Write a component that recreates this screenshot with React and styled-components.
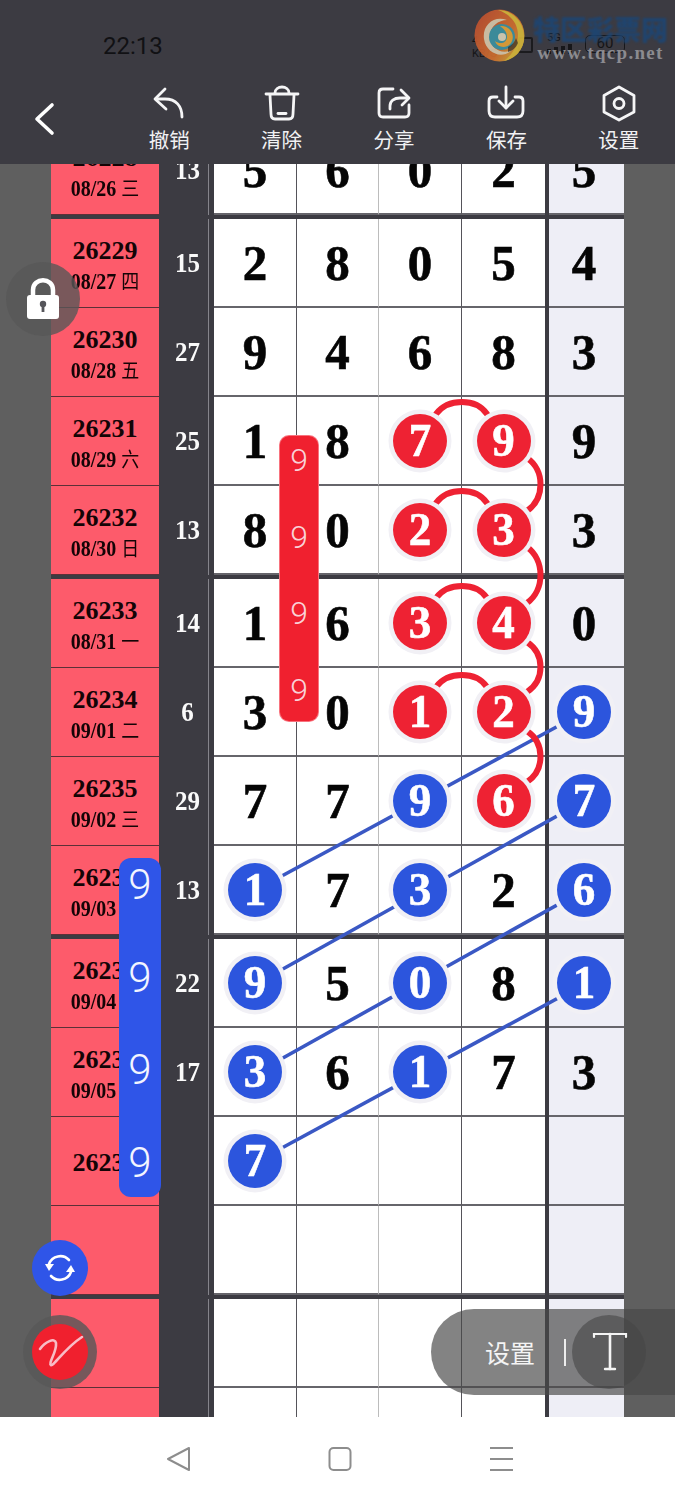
import React from "react";
import styled, { createGlobalStyle } from "styled-components";

const Global = createGlobalStyle`
  html, body { margin: 0; padding: 0; background: #ffffff; }
  * { box-sizing: border-box; }
`;

const SERIF = `"Liberation Serif", "Noto Sans CJK SC", serif`;
const SANS = `"Noto Sans CJK SC", "Noto Sans", sans-serif`;
const DARK = "#3c3b42";
const RED = "#ee2233";
const BLUE = "#2c55dd";

const Page = styled.div`
  position: relative;
  width: 675px;
  height: 1500px;
  overflow: hidden;
  display: flex;
  flex-direction: column;
`;

const Header = styled.header`
  position: relative;
  z-index: 6;
  height: 164px;
  background: ${DARK};
  flex: none;
`;

const StatusRow = styled.div`
  height: 83px;
  display: flex;
  justify-content: space-between;
  padding: 32px 50px 0 103px;
`;

const Clock = styled.span`
  font: 400 24px/28px Roboto, sans-serif;
  color: #111114;
`;

const StatusGroup = styled.div`
  display: flex;
  align-items: flex-start;
  gap: 6px;
  color: #141416;
  font-family: Roboto, sans-serif;
`;

const Speed = styled.div`
  width: 40px;
  font-size: 11px;
  line-height: 13px;
  padding-top: 2px;
`;

const SimBox = styled.div`
  width: 15px;
  height: 16px;
  margin-top: 5px;
  border: 2px solid #1b1b1e;
  border-radius: 2px;
`;

const Signal = styled.div`
  width: 32px;
  font-size: 11px;
  line-height: 12px;
  margin-left: 8px;
`;

const Bars = styled.div`
  display: flex;
  align-items: flex-end;
  gap: 3px;
  height: 10px;
`;

const Bar = styled.i`
  display: block;
  width: 4px;
  height: ${(p) => p.$h}px;
  background: #17171a;
`;

const Battery = styled.div`
  width: 40px;
  height: 18px;
  margin-top: 3px;
  border: 1.5px solid #17171a;
  border-radius: 5px;
  font-size: 15px;
  line-height: 15px;
  text-align: center;
`;

const Watermark = styled.div`
  position: absolute;
  top: 9px;
  left: 474px;
  display: flex;
  gap: 8px;
`;

const WatermarkText = styled.div`
  display: flex;
  flex-direction: column;
  align-items: center;
  padding-top: 6px;
`;

const WatermarkTitle = styled.span`
  font: 900 27px/28px ${SANS};
  color: #1b4676;
  opacity: 0.85;
  white-space: nowrap;
  filter: blur(0.9px);
`;

const WatermarkUrl = styled.span`
  font: 700 19px/20px ${SERIF};
  letter-spacing: 1.3px;
  color: #8b8b90;
  white-space: nowrap;
`;

const Toolbar = styled.nav`
  display: flex;
`;

const BackSlot = styled.div`
  width: 113px;
  flex: none;
  height: 81px;
  padding-left: 20px;
`;

const ToolItem = styled.div`
  flex: 1;
  display: flex;
  flex-direction: column;
  align-items: center;
`;

const ToolLabel = styled.span`
  font: 400 20.5px/32px ${SANS};
  color: #f1f1f3;
`;

const Body = styled.main`
  flex: 1;
  overflow: hidden;
  background: #5f5f5f;
  padding: 0 51px;
`;

const Table = styled.div`
  margin-top: -38px;
  width: 573px;
`;

const Row = styled.div`
  display: grid;
  grid-template-columns: 108px 55px 83px 82px 83px 83px 79px;
  height: ${(p) => (p.$heavy ? 93 : 89)}px;
  padding-top: ${(p) => (p.$heavy ? 4 : 0)}px;
  background: ${DARK};
`;

const DateCell = styled.div`
  background: #fd5b6b;
  border-bottom: 1px solid #5d3038;
  display: flex;
  flex-direction: column;
  align-items: center;
  justify-content: center;
  padding-top: 3px;
  color: #140406;
  font-family: ${SERIF};
  font-weight: 700;
  white-space: nowrap;
`;

const Issue = styled.span`
  font-size: 26px;
  line-height: 31px;
`;

const DateText = styled.span`
  display: inline-block;
  font-size: 20px;
  line-height: 28px;
  transform: scaleY(1.12);
`;

const Weekday = styled.span`
  font-family: ${SANS};
  font-weight: 400;
  font-size: 18px;
  margin-left: 5px;
`;

const NumCell = styled.div`
  margin-right: 5px;
  padding: 0 0 3px 8px;
  border-right: 1px solid #85848b;
  display: flex;
  align-items: center;
  justify-content: center;
  color: #fafafa;
  font: 700 25px/1 ${SERIF};
`;

const NumText = styled.span`
  display: inline-block;
  transform: scaleY(1.1);
`;

const Cell = styled.div`
  background: #ffffff;
  border-bottom: 2px solid #66656b;
  border-right: ${(p) => (p.$line ? `1px solid ${p.$line}` : "none")};
  display: flex;
  align-items: center;
  justify-content: center;
  color: #050505;
  font: 700 49px/1 ${SERIF};
`;

const ExtraCell = styled(Cell)`
  margin-left: 4px;
  padding-right: 5px;
  background: #eeeef6;
`;

const Digit = styled.span`
  display: inline-block;
  transform: scaleY(1.05);
  -webkit-text-stroke: 0.6px currentColor;
`;

const Ball = styled.span`
  position: relative;
  z-index: 2;
  width: 54px;
  height: 54px;
  border-radius: 50%;
  background: ${(p) => (p.$tone === "r" ? RED : BLUE)};
  box-shadow: 0 0 0 4.500px #f1f0f5;
  color: #ffffff;
  display: flex;
  align-items: center;
  justify-content: center;
  font-size: 45px;
`;

const Links = styled.svg`
  position: absolute;
  z-index: 1;
  left: 0;
  top: 0;
  pointer-events: none;
`;

const Pill = styled.div`
  position: absolute;
  z-index: 3;
  display: flex;
  flex-direction: column;
  align-items: center;
  font-family: Roboto, sans-serif;
  font-weight: 300;
`;

const RedPill = styled(Pill)`
  left: 280px;
  top: 436px;
  width: 38px;
  height: 285px;
  padding-top: 4px;
  border-radius: 9px;
  background: #f0202f;
  color: #f9d2d7;
  font-size: 32px;
  line-height: 40px;
  gap: 36.5px;
  box-shadow: 0 0 0 1px #f8737e;
`;

const BluePill = styled(Pill)`
  left: 119px;
  top: 858px;
  width: 42px;
  height: 339px;
  padding-top: 1px;
  border-radius: 12px;
  background: #2f55e8;
  color: #f3f5ff;
  font-size: 42px;
  line-height: 52px;
  gap: 40.7px;
`;

const Lock = styled.div`
  position: absolute;
  z-index: 4;
  left: 6px;
  top: 262px;
  width: 74px;
  height: 74px;
  border-radius: 50%;
  background: rgba(88, 88, 88, 0.8);
`;

const SyncButton = styled.div`
  position: absolute;
  z-index: 4;
  left: 32px;
  top: 1240px;
  width: 56px;
  height: 56px;
  border-radius: 50%;
  background: #2f55e8;
`;

const PenHalo = styled.div`
  position: absolute;
  z-index: 4;
  left: 23px;
  top: 1315px;
  width: 74px;
  height: 74px;
  border-radius: 50%;
  background: rgba(88, 88, 88, 0.82);
  display: flex;
  align-items: center;
  justify-content: center;
`;

const PenButton = styled.div`
  width: 56px;
  height: 56px;
  border-radius: 50%;
  background: #f0202e;
`;

const SettingsPill = styled.div`
  position: absolute;
  z-index: 4;
  left: 431px;
  right: 0;
  top: 1309px;
  height: 86px;
  border-radius: 43px 0 0 43px;
  background: rgba(72, 72, 72, 0.68);
  display: flex;
  align-items: center;
  padding-left: 54px;
`;

const SettingsLabel = styled.span`
  font: 400 25px/1 ${SANS};
  color: #f4f4f4;
  width: 79px;
`;

const PillDivider = styled.i`
  display: block;
  width: 2px;
  height: 27px;
  background: #ededed;
`;

const TextTool = styled.div`
  width: 74px;
  height: 74px;
  margin-left: 6px;
  border-radius: 50%;
  background: rgba(70, 70, 70, 0.6);
`;

const NavBar = styled.footer`
  position: relative;
  z-index: 6;
  flex: none;
  height: 83px;
  background: #ffffff;
  display: flex;
  justify-content: center;
  align-items: center;
  padding-left: 5px;
`;

const NavSlot = styled.div`
  width: 161px;
  display: flex;
  justify-content: center;
`;

const DATA = [
  ["26228", "08/26", "三", "13", ["5", "6", "0", "2", "5"]],
  ["26229", "08/27", "四", "15", ["2", "8", "0", "5", "4"], 1],
  ["26230", "08/28", "五", "27", ["9", "4", "6", "8", "3"]],
  ["26231", "08/29", "六", "25", ["1", "8", "7r", "9r", "9"]],
  ["26232", "08/30", "日", "13", ["8", "0", "2r", "3r", "3"]],
  ["26233", "08/31", "一", "14", ["1", "6", "3r", "4r", "0"], 1],
  ["26234", "09/01", "二", "6", ["3", "0", "1r", "2r", "9b"]],
  ["26235", "09/02", "三", "29", ["7", "7", "9b", "6r", "7b"]],
  ["26236", "09/03", "四", "13", ["1b", "7", "3b", "2", "6b"]],
  ["26237", "09/04", "五", "22", ["9b", "5", "0b", "8", "1b"], 1],
  ["26238", "09/05", "六", "17", ["3b", "6", "1b", "7", "3"]],
  ["26239", "", "", "", ["7b", "", "", "", ""]],
  ["", "", "", "", ["", "", "", "", ""]],
  ["", "", "", "", ["", "", "", "", ""], 1],
  ["", "", "", "", ["", "", "", "", ""]],
];

const LINES = ["#55545a", "#bcbcbc", "#55545a", null];

const Value = ({ v }) => {
  if (!v) return null;
  return v.length === 2 ? (
    <Ball $tone={v[1]}>
      <Digit>{v[0]}</Digit>
    </Ball>
  ) : (
    <Digit>{v}</Digit>
  );
};

const TOOLS = [
  {
    label: "撤销",
    box: "149 83 40 40",
    draw: (
      <>
        <path d="M165 89 L155 99 L166 109" />
        <path d="M156 99 H165 C176 99 182 106 182 117" />
      </>
    ),
  },
  {
    label: "清除",
    box: "261 83 40 40",
    draw: (
      <>
        <path d="M265 94 H297" />
        <path d="M274 93 C274 85 288 85 288 93" />
        <path d="M269 95 L270 114 C270 117 271 119 274 119 H288 C291 119 292 117 292 114 L293 95" />
        <path d="M277 113.5 H285" />
      </>
    ),
  },
  {
    label: "分享",
    box: "374 83 40 40",
    draw: (
      <>
        <path d="M393 89 H383 C380.500 89 379 90.500 379 93 V113 C379 115.500 380.500 117 383 117 H405 C407.500 117 409 115.500 409 113 V105" />
        <path d="M390 109 V106 C390 101 394 98 400 98 H408" />
        <path d="M401 90 L409 98 L402 105" />
      </>
    ),
  },
  {
    label: "保存",
    box: "487 83 40 40",
    draw: (
      <>
        <path d="M498 97 H494 C491.500 97 490 98.500 490 101 V111 C490 115 492 117 496 117 H518 C522 117 524 115 524 111 V101 C524 98.500 522.500 97 520 97 H516" />
        <path d="M507 87 V108" />
        <path d="M500 101 L507 108 L514 101" />
      </>
    ),
  },
  {
    label: "设置",
    box: "599 83 40 40",
    draw: (
      <>
        <path d="M619 87 L634 95.500 V112 L619 120 L604 112 V95.500 Z" />
        <circle cx="619" cy="103.500" r="5" />
      </>
    ),
  },
];

const ToolIcon = styled.svg`
  width: 40px;
  height: 40px;
  fill: none;
  stroke: #f5f5f6;
  stroke-width: 2.8;
  stroke-linecap: round;
  stroke-linejoin: round;
`;

const BallLinks = () => (
  <Links width="675" height="1500" viewBox="0 0 675 1500" fill="none">
    <g stroke="#3a58c4" strokeWidth="3.600">
      <path d="M256 890 L584 712" />
      <path d="M256 984 L584 801" />
      <path d="M256 1073 L584 890" />
      <path d="M256 1162 L584 984" />
    </g>
    <g stroke={RED} strokeWidth="6" strokeLinecap="round">
      <path d="M436 414 C448 398 476 398 487 414" />
      <path d="M436 503 C448 487 476 487 487 503" />
      <path d="M436 598 C448 582 476 582 487 598" />
      <path d="M436 687 C448 671 476 671 487 687" />
      <path d="M527 458 C545 470 545 498 527 511" />
      <path d="M527 547 C545 560 545 590 527 603" />
      <path d="M527 642 C545 654 545 680 527 692" />
      <path d="M527 731 C545 743 545 770 527 782" />
    </g>
  </Links>
);

export default function App() {
  return (
    <Page>
      <Global />
      <Header>
        <StatusRow>
          <Clock>22:13</Clock>
          <StatusGroup>
            <Speed>
              4.
              <br />
              KB/S
            </Speed>
            <SimBox />
            <Signal>
              5G
              <Bars>
                <Bar $h={5} />
                <Bar $h={7} />
                <Bar $h={8} />
                <Bar $h={10} />
              </Bars>
            </Signal>
            <Battery>60</Battery>
          </StatusGroup>
        </StatusRow>
        <Watermark>
          <svg width="51" height="53" viewBox="0 0 51 53" opacity="0.9">
            <defs>
              <linearGradient id="rim" x1="0" y1="0.2" x2="1" y2="0.9">
                <stop offset="0" stopColor="#c04f30" />
                <stop offset="0.6" stopColor="#d2702f" />
                <stop offset="1" stopColor="#cdb83a" />
              </linearGradient>
            </defs>
            <ellipse cx="25.500" cy="26.500" rx="25" ry="26" fill="url(#rim)" />
            <path d="M24 1 C40 1 51 14 50 30 C49 42 40 50 30 52 C40 44 44 36 44 26 C44 14 36 5 24 1 Z" fill="#d8b93a" />
            <path d="M10 30 C8 16 20 6 33 11 C24 11 15 18 16 29 C17 40 28 46 38 41 C28 51 12 44 10 30 Z" fill="#d9c9ac" />
            <circle cx="28" cy="28" r="13" fill="#3b93a3" />
            <path d="M26 17 C36 16 42 26 37 34 C33 40 23 39 21 32 C26 36 33 34 33 28 C33 23 30 20 26 17 Z" fill="#e3a336" />
            <circle cx="28" cy="28" r="4" fill="#d9d2b8" />
            <path d="M34 38 C38 36 41 33 42 29 L44 34 C42 39 38 42 34 43 Z" fill="#1d1d20" opacity="0.6" />
          </svg>
          <WatermarkText>
            <WatermarkTitle>特区彩票网</WatermarkTitle>
            <WatermarkUrl>www.tqcp.net</WatermarkUrl>
          </WatermarkText>
        </Watermark>
        <Toolbar>
          <BackSlot>
            <svg width="40" height="56" viewBox="20 83 40 56" fill="none" stroke="#fff" strokeWidth="3.600" strokeLinecap="round" strokeLinejoin="round">
              <path d="M52 105 L37 119 L52 133" />
            </svg>
          </BackSlot>
          {TOOLS.map((t) => (
            <ToolItem key={t.label}>
              <ToolIcon viewBox={t.box}>{t.draw}</ToolIcon>
              <ToolLabel>{t.label}</ToolLabel>
            </ToolItem>
          ))}
        </Toolbar>
      </Header>

      <Body>
        <Table>
          {DATA.map(([issue, date, day, sum, vals, heavy], i) => (
            <Row key={i} $heavy={!!heavy}>
              <DateCell>
                {issue && <Issue>{issue}</Issue>}
                {date && (
                  <DateText>
                    {date}
                    <Weekday>{day}</Weekday>
                  </DateText>
                )}
              </DateCell>
              <NumCell>
                <NumText>{sum}</NumText>
              </NumCell>
              {vals.slice(0, 4).map((v, j) => (
                <Cell key={j} $line={LINES[j]}>
                  <Value v={v} />
                </Cell>
              ))}
              <ExtraCell>
                <Value v={vals[4]} />
              </ExtraCell>
            </Row>
          ))}
        </Table>
      </Body>

      <BallLinks />

      <RedPill>
        <span>9</span>
        <span>9</span>
        <span>9</span>
        <span>9</span>
      </RedPill>
      <BluePill>
        <span>9</span>
        <span>9</span>
        <span>9</span>
        <span>9</span>
      </BluePill>

      <Lock>
        <svg width="74" height="74" viewBox="6 262 74 74">
          <path d="M33 297 V290 C33 277 53 277 53 290 V297" fill="none" stroke="#fff" strokeWidth="4.500" />
          <rect x="27" y="295" width="32" height="24" rx="3" fill="#fff" />
          <circle cx="43" cy="304" r="3.200" fill="#55555a" />
          <rect x="41.600" y="305" width="2.800" height="7" fill="#55555a" />
        </svg>
      </Lock>

      <SyncButton>
        <svg width="56" height="56" viewBox="32 1240 56 56" fill="none">
          <g stroke="#fff" strokeWidth="2.600" strokeLinecap="round">
            <path d="M49 1264 A12 12 0 0 1 69 1260" />
            <path d="M71 1272 A12 12 0 0 1 51 1276" />
          </g>
          <path d="M45 1264 L54 1264 L49 1271 Z" fill="#fff" />
          <path d="M66 1272 L75 1272 L71 1265 Z" fill="#fff" />
        </svg>
      </SyncButton>

      <PenHalo>
        <PenButton>
          <svg width="56" height="56" viewBox="32 1324 56 56" fill="none">
            <path d="M40 1349 C45 1342 55 1337 56 1343 C57 1352 48 1363 51 1365 C53 1367 65 1348 82 1337" stroke="#f8bcc6" strokeWidth="2.600" strokeLinecap="round" />
          </svg>
        </PenButton>
      </PenHalo>

      <SettingsPill>
        <SettingsLabel>设置</SettingsLabel>
        <PillDivider />
        <TextTool>
          <svg width="74" height="74" viewBox="572 1315 74 74" fill="none" stroke="#f4f4f4" strokeLinecap="round">
            <path d="M594 1337 V1334 H626 V1337" strokeWidth="2.200" />
            <path d="M610 1334 V1369" strokeWidth="2.600" />
            <path d="M605 1369 H615" strokeWidth="2.400" />
          </svg>
        </TextTool>
      </SettingsPill>

      <NavBar>
        <NavSlot>
          <svg width="26" height="26" viewBox="0 0 26 26" fill="none" stroke="#8d8d8d" strokeWidth="2" strokeLinejoin="round">
            <path d="M23 2 L2 13 L23 24 Z" />
          </svg>
        </NavSlot>
        <NavSlot>
          <svg width="26" height="26" viewBox="0 0 26 26" fill="none" stroke="#8d8d8d" strokeWidth="2">
            <rect x="2.500" y="2" width="21" height="22" rx="4" />
          </svg>
        </NavSlot>
        <NavSlot>
          <svg width="26" height="26" viewBox="0 0 26 26" fill="none" stroke="#8d8d8d" strokeWidth="2">
            <path d="M2 2 H25 M2 13 H25 M2 24 H25" />
          </svg>
        </NavSlot>
      </NavBar>
    </Page>
  );
}
